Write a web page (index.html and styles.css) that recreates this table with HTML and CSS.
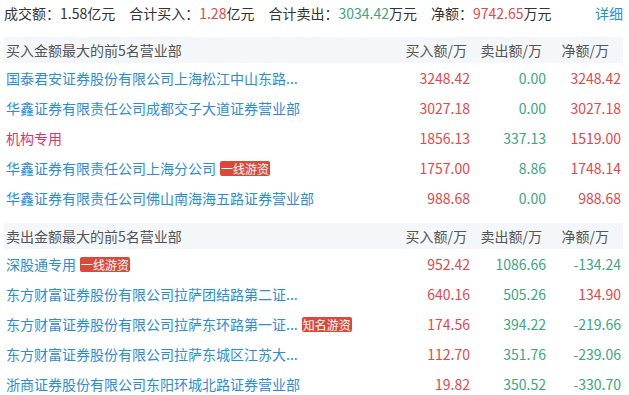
FILE: index.html
```html
<!DOCTYPE html>
<html lang="zh">
<head>
<meta charset="utf-8">
<link rel="stylesheet" href="styles.css">
</head>
<body>
<div class="wrap">
  <div class="summary">
    <div class="stats">
      <span class="stat">成交额：<span class="dark">1.58</span>亿元</span>
      <span class="stat">合计买入：<span class="up">1.28</span>亿元</span>
      <span class="stat">合计卖出：<span class="down">3034.42</span>万元</span>
      <span class="stat">净额：<span class="up">9742.65</span>万元</span>
    </div>
    <span class="detail">详细</span>
  </div>

  <div class="section">
    <div class="row head">
      <div class="name">买入金额最大的前5名营业部</div>
      <div class="c buy">买入额/万</div>
      <div class="c sell">卖出额/万</div>
      <div class="c net">净额/万</div>
    </div>
    <div class="row">
      <div class="name link">国泰君安证券股份有限公司上海松江中山东路...</div>
      <div class="c up">3248.42</div>
      <div class="c down">0.00</div>
      <div class="c up">3248.42</div>
    </div>
    <div class="row">
      <div class="name link">华鑫证券有限责任公司成都交子大道证券营业部</div>
      <div class="c up">3027.18</div>
      <div class="c down">0.00</div>
      <div class="c up">3027.18</div>
    </div>
    <div class="row">
      <div class="name inst">机构专用</div>
      <div class="c up">1856.13</div>
      <div class="c down">337.13</div>
      <div class="c up">1519.00</div>
    </div>
    <div class="row">
      <div class="name link">华鑫证券有限责任公司上海分公司<span class="badge">一线游资</span></div>
      <div class="c up">1757.00</div>
      <div class="c down">8.86</div>
      <div class="c up">1748.14</div>
    </div>
    <div class="row">
      <div class="name link">华鑫证券有限责任公司佛山南海海五路证券营业部</div>
      <div class="c up">988.68</div>
      <div class="c down">0.00</div>
      <div class="c up">988.68</div>
    </div>
  </div>

  <div class="section">
    <div class="row head">
      <div class="name">卖出金额最大的前5名营业部</div>
      <div class="c buy">买入额/万</div>
      <div class="c sell">卖出额/万</div>
      <div class="c net">净额/万</div>
    </div>
    <div class="row">
      <div class="name link">深股通专用<span class="badge">一线游资</span></div>
      <div class="c up">952.42</div>
      <div class="c down">1086.66</div>
      <div class="c down">-134.24</div>
    </div>
    <div class="row">
      <div class="name link">东方财富证券股份有限公司拉萨团结路第二证...</div>
      <div class="c up">640.16</div>
      <div class="c down">505.26</div>
      <div class="c up">134.90</div>
    </div>
    <div class="row">
      <div class="name link">东方财富证券股份有限公司拉萨东环路第一证...<span class="badge">知名游资</span></div>
      <div class="c up">174.56</div>
      <div class="c down">394.22</div>
      <div class="c down">-219.66</div>
    </div>
    <div class="row">
      <div class="name link">东方财富证券股份有限公司拉萨东城区江苏大...</div>
      <div class="c up">112.70</div>
      <div class="c down">351.76</div>
      <div class="c down">-239.06</div>
    </div>
    <div class="row">
      <div class="name link">浙商证券股份有限公司东阳环城北路证券营业部</div>
      <div class="c up">19.82</div>
      <div class="c down">350.52</div>
      <div class="c down">-330.70</div>
    </div>
  </div>
</div>
</body>
</html>
```
FILE: styles.css
```css
html, body {
  margin: 0;
  padding: 0;
  background: #fff;
}
body {
  font-family: "Noto Sans CJK SC", "Noto Sans", sans-serif;
  font-size: 14px;
  color: #333;
}
.wrap {
  padding: 0 6px 0 4px;
}
.summary {
  display: flex;
  justify-content: space-between;
  align-items: center;
  height: 26px;
  margin-bottom: 11px;
}
.stats {
  display: flex;
  gap: 14px;
}
.dark { color: #333; }
.up { color: #e5474a; }
.down { color: #3ba67f; }
.detail { color: #2b8ed5; }
.section {
  margin-bottom: 10px;
}
.row {
  display: flex;
  align-items: center;
  height: 30px;
  padding-left: 2px;
}
.row.head {
  height: 26px;
  background: #f4f7fa;
  color: #555;
}
.name {
  flex: 1;
  white-space: nowrap;
  display: flex;
  align-items: center;
}
.link { color: #2b8ed5; }
.inst { color: #e2336b; }
.c {
  width: 76px;
  text-align: right;
  padding-right: 0;
  box-sizing: border-box;
}
.row .c:last-child {
  width: 77px;
  padding-right: 2px;
}
.head .buy { padding-right: 3px; }
.head .sell { padding-right: 4px; }
.row.head .net { padding-right: 14px; }
.badge {
  display: inline-block;
  margin-left: 4px;
  padding: 0 1px;
  height: 15px;
  line-height: 15px;
  font-size: 12px;
  color: #fff;
  background: #d94a3a;
  border-radius: 2px;
}
```
